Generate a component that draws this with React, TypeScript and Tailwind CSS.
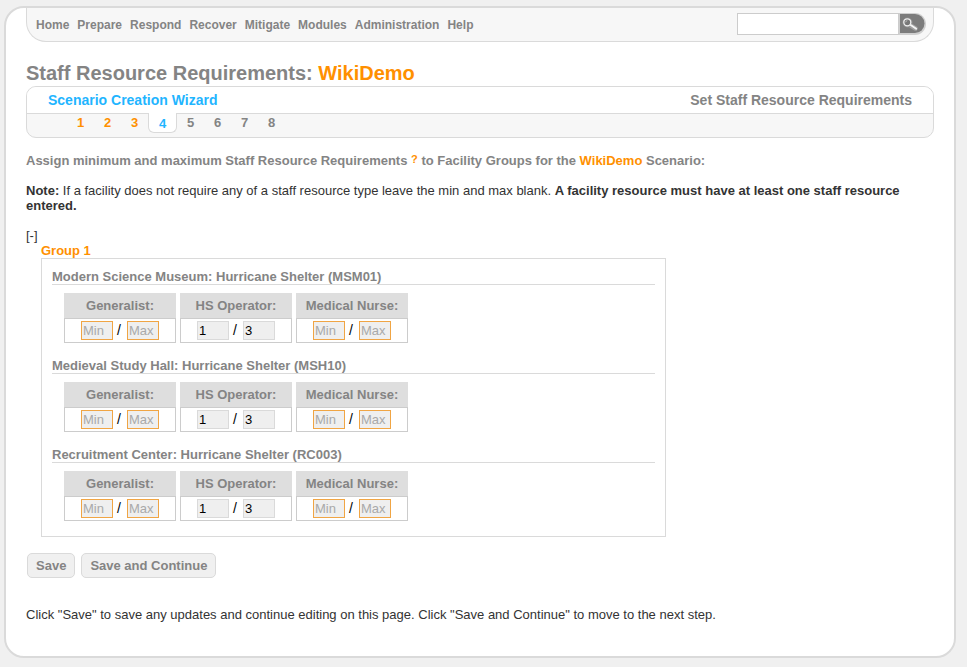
const menu = ['Home', 'Prepare', 'Respond', 'Recover', 'Mitigate', 'Modules', 'Administration', 'Help'];
const steps = [1, 2, 3, 4, 5, 6, 7, 8];
const currentStep = 4;

const staffTypes = [
  { name: 'Generalist', min: '', max: '' },
  { name: 'HS Operator', min: '1', max: '3' },
  { name: 'Medical Nurse', min: '', max: '' },
];

const facilities = [
  { name: 'Modern Science Museum', code: 'MSM01' },
  { name: 'Medieval Study Hall', code: 'MSH10' },
  { name: 'Recruitment Center', code: 'RC003' },
];

function NavBar() {
  return (
    <header className="flex h-[34px] items-start justify-between rounded-b-[20px] border border-t-0 border-[#dadada] bg-[#f7f7f7] pl-[9px] pr-[7px]">
      <nav className="flex gap-2 pt-[9px] text-[12px] leading-4 font-bold text-[#848484]">
        {menu.map((item) => (
          <a key={item} href="#">
            {item}
          </a>
        ))}
      </nav>
      <form className="flex pt-[5px]" onSubmit={(e) => e.preventDefault()}>
        <input
          type="text"
          aria-label="Search"
          className="h-[22px] w-[162px] border border-[#cccccc] bg-white px-1 text-[13px] text-[#333333] outline-none"
        />
        <button type="submit" aria-label="Search" className="block h-[22px] w-[27px]">
          <svg viewBox="0 0 27 22" className="block h-[22px] w-[27px]">
            <path d="M0 0H16A11 11 0 0 1 16 22H0Z" fill="#cfcfcf" />
            <path d="M1 1H16A9.5 9.5 0 0 1 16 20H1Z" fill="#7c7c7c" />
            <path d="M10 11.5L16.5 15.5" stroke="#a0a0a0" strokeWidth="4.5" strokeLinecap="round" />
            <circle cx="8.5" cy="9.5" r="5" fill="#929292" />
            <path d="M11 11.5L17.2 15.7" stroke="#f4f4f4" strokeWidth="1.9" strokeLinecap="round" />
            <circle cx="8.3" cy="9.3" r="3.5" fill="#777777" stroke="#efefef" strokeWidth="1.3" />
            <path d="M6.7 9.3A1.7 1.7 0 0 1 8.3 7.6" fill="none" stroke="#c5c5c5" strokeWidth="0.8" />
          </svg>
        </button>
      </form>
    </header>
  );
}

function stepClass(step: number) {
  if (step === currentStep) {
    return '-mt-px h-[20px] w-[29px] rounded-b-[6px] border border-t-0 border-[#dadada] bg-white pt-[3px] text-[#1fb5ff]';
  }
  return step < currentStep ? 'w-[27px] pt-px text-[#ff9000]' : 'w-[27px] pt-px text-[#848484]';
}

function Wizard() {
  return (
    <section className="rounded-[10px] border border-[#dadada] bg-[#f7f7f7]">
      <div className="flex h-[27px] justify-between rounded-t-[9px] border-b border-[#dadada] bg-white px-[21px] pt-[5px] text-[14px] leading-4 font-bold">
        <h2 className="text-[#1fb5ff]">Scenario Creation Wizard</h2>
        <span className="text-[#848484]">Set Staff Resource Requirements</span>
      </div>
      <ol className="flex h-[23px] pl-10 text-center text-[13px] leading-[15px] font-bold">
        {steps.map((step) => (
          <li key={step} className={stepClass(step)}>
            <a href="#" className="block">
              {step}
            </a>
          </li>
        ))}
      </ol>
    </section>
  );
}

function AmountInput({ label, hint, value }: { label: string; hint: string; value: string }) {
  return (
    <input
      type="text"
      aria-label={label}
      placeholder={hint}
      defaultValue={value}
      className={
        'h-[19px] w-[32px] border bg-[#efefef] px-px text-[13px] leading-[15px] text-black outline-none placeholder:text-[#a9a9a9] ' +
        (value ? 'border-[#dadada]' : 'border-[#f0a544]')
      }
    />
  );
}

function Facility({ name, code }: { name: string; code: string }) {
  return (
    <section className="mb-[15px]">
      <h4 className="border-b border-[#dadada] font-bold text-[#848484]">
        {name}: Hurricane Shelter ({code})
      </h4>
      <table className="mt-2 ml-2 table-fixed border-separate border-spacing-x-1 border-spacing-y-0">
        <thead>
          <tr>
            {staffTypes.map((type) => (
              <th key={type.name} scope="col" className="h-[25px] w-[112px] bg-[#dedede] p-0 text-center font-bold text-[#848484]">
                {type.name}:
              </th>
            ))}
          </tr>
        </thead>
        <tbody>
          <tr>
            {staffTypes.map((type) => (
              <td key={type.name} className="h-[25px] w-[112px] border border-[#cccccc] p-0">
                <div className="flex items-center justify-center">
                  <AmountInput label={`${name} ${type.name} minimum`} hint="Min" value={type.min} />
                  <span className="w-[14px] pl-1 text-[14px] text-black">/</span>
                  <AmountInput label={`${name} ${type.name} maximum`} hint="Max" value={type.max} />
                </div>
              </td>
            ))}
          </tr>
        </tbody>
      </table>
    </section>
  );
}

export default function App() {
  return (
    <div className="min-h-screen bg-[#f0f0f0] pt-[6px] pr-[11px] pb-[9px] pl-1 font-['Liberation_Sans',Arial,sans-serif] text-[13px] leading-[15px] text-[#333333]">
      <div className="rounded-[20px] border-2 border-[#dadada] bg-white px-5 pb-[34px]">
        <NavBar />
        <main>
          <h1 className="mt-[19px] pb-px text-[20px] leading-6 font-bold text-[#848484]">
            Staff Resource Requirements: <span className="text-[#ff9000]">WikiDemo</span>
          </h1>
          <Wizard />
          <h3 className="mt-[15px] font-bold text-[#848484]">
            Assign minimum and maximum Staff Resource Requirements{' '}
            <a href="#" className="align-top text-[11px] leading-3 text-[#ff9000]">
              ?
            </a>{' '}
            to Facility Groups for the <span className="text-[#ff9000]">WikiDemo</span> Scenario:
          </h3>
          <p className="mt-[15px]">
            <b>Note:</b> If a facility does not require any of a staff resource type leave the min and max blank.{' '}
            <b>A facility resource must have at least one staff resource entered.</b>
          </p>
          <form onSubmit={(e) => e.preventDefault()}>
            <button type="button" aria-label="Collapse Group 1" className="mt-[15px] block h-[15px]">
              [-]
            </button>
            <section className="ml-[15px]">
              <h3 className="font-bold text-[#ff9000]">Group 1</h3>
              <div className="max-w-[625px] border border-[#dadada] px-[10px] pt-[10px]">
                {facilities.map((facility) => (
                  <Facility key={facility.code} name={facility.name} code={facility.code} />
                ))}
              </div>
            </section>
            <div className="mt-4 ml-px flex gap-[6px] font-bold text-[#848484]">
              <button type="submit" className="h-[25px] rounded-[5px] border border-[#dadada] bg-[#f0f0f0] px-2">
                Save
              </button>
              <button type="submit" className="h-[25px] rounded-[5px] border border-[#dadada] bg-[#f0f0f0] px-2">
                Save and Continue
              </button>
            </div>
          </form>
          <p className="mt-[29px]">
            Click "Save" to save any updates and continue editing on this page. Click "Save and Continue" to move to the
            next step.
          </p>
        </main>
      </div>
    </div>
  );
}
